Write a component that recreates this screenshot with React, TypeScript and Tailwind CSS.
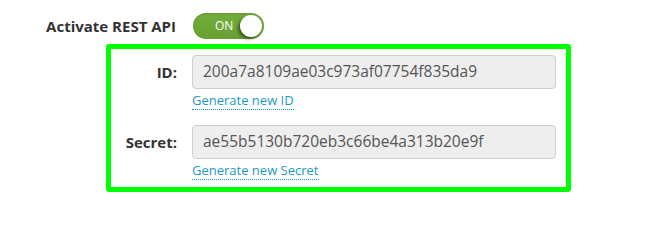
const FONT = "font-['Open_Sans',_'Noto_Sans',_sans-serif]";

function Toggle() {
  return (
    <div className="relative h-[26px] w-[71px] rounded-full bg-gradient-to-b from-[#73ad3d] to-[#66a032] shadow-[inset_0_1px_2px_rgba(0,0,0,0.15)]">
      <span className="absolute left-[22px] top-[4px] text-[12px] leading-[18px] text-white">ON</span>
      <span className="absolute right-[2px] top-[2px] h-[22px] w-[22px] rounded-full bg-white shadow-[-2px_2px_3px_rgba(0,0,0,0.45)]" />
    </div>
  );
}

function Field({ label, value, link }: { label: string; value: string; link: string }) {
  return (
    <div className="flex flex-col">
      <div className="flex items-center">
        <label className="w-[66px] text-right text-[15px] font-bold text-[#333]">{label}</label>
        <div className="ml-[15px] flex h-[34px] w-[364px] items-center rounded-[4px] border border-[#cfcfcf] bg-[#eeeeee] px-[10px] text-[15.5px] text-[#555]">
          {value}
        </div>
      </div>
      <div className="ml-[81px] mt-[2px] text-[13px] leading-[18px]">
        <a href="#" className="border-b border-dotted border-[#1b9ac3] text-[#1b9ac3]">
          {link}
        </a>
      </div>
    </div>
  );
}

export default function App() {
  return (
    <div className={`${FONT} h-[205px] w-[656px] bg-white`}>
      <div className="flex items-center pt-[13px]">
        <div className="w-[176px] text-right text-[15px] font-bold text-[#333]">Activate REST API</div>
        <div className="ml-[17px]">
          <Toggle />
        </div>
      </div>
      <div className="ml-[106px] mt-[5px] flex h-[148px] w-[465px] flex-col gap-[16px] rounded-[3px] border-[5px] border-[#00ff00] pt-[6px]">
        <Field label="ID:" value="200a7a8109ae03c973af07754f835da9" link="Generate new ID" />
        <Field label="Secret:" value="ae55b5130b720eb3c66be4a313b20e9f" link="Generate new Secret" />
      </div>
    </div>
  );
}
